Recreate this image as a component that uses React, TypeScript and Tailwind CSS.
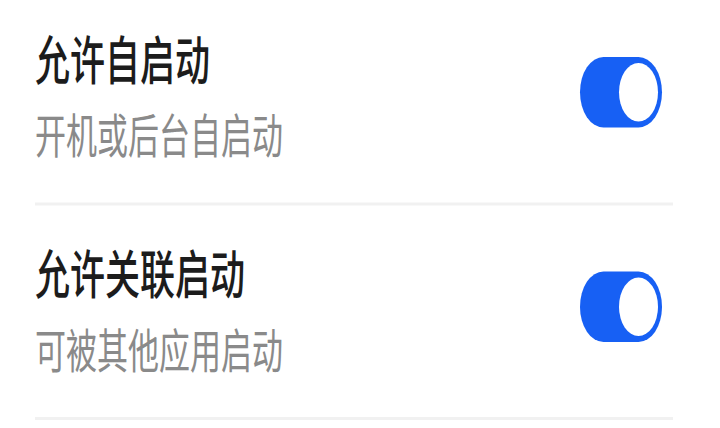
import { useState } from 'react';

type Item = {
  id: string;
  title: string;
  desc: string;
};

const items: Item[] = [
  { id: 'self', title: '允许自启动', desc: '开机或后台自启动' },
  { id: 'linked', title: '允许关联启动', desc: '可被其他应用启动' },
];

function Toggle({ on, onChange }: { on: boolean; onChange: () => void }) {
  return (
    <button
      type="button"
      onClick={onChange}
      className={`flex items-center w-[82px] h-[47px] rounded-full p-[4px] transition-colors ${
        on ? 'bg-[#1760f4] justify-end' : 'bg-[#e5e5ea] justify-start'
      }`}
    >
      <span className="block w-[39px] h-[39px] rounded-full bg-white" />
    </button>
  );
}

export default function App() {
  const [state, setState] = useState<Record<string, boolean>>({ self: true, linked: true });

  return (
    <div className="w-[720px] h-[428px] overflow-hidden bg-white">
      {/* the whole list is rendered stretched vertically */}
      <div
        className="origin-top scale-y-150 -mt-[9px] pl-[35px] pr-[47px]"
        style={{ fontFamily: '"Noto Sans CJK SC", "Noto Sans", sans-serif' }}
      >
        {items.map((item) => (
          <div key={item.id} className="flex items-start justify-between h-[143px] border-b-2 border-[#f1f1f1]">
            <div className="mt-[24px]">
              <div className="text-[35px] leading-[40px] font-medium text-[#1c1c1c]">{item.title}</div>
              <div className="mt-[13px] text-[31px] leading-[36px] text-[#8a8a8a]">{item.desc}</div>
            </div>
            <div className="mt-[44px] mr-[11px]">
              <Toggle
                on={state[item.id]}
                onChange={() => setState((s) => ({ ...s, [item.id]: !s[item.id] }))}
              />
            </div>
          </div>
        ))}
      </div>
    </div>
  );
}
